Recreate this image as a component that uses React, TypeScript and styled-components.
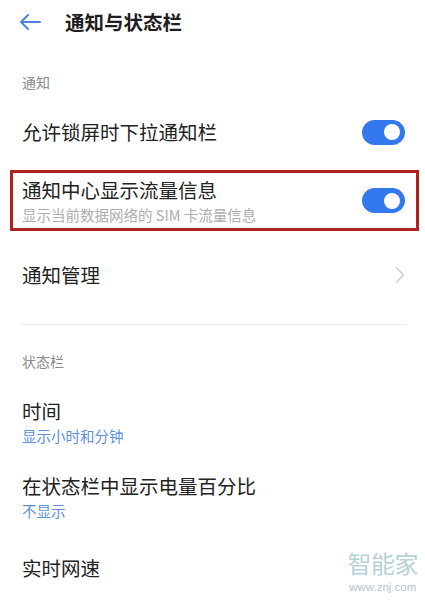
import React from "react";
import styled, { createGlobalStyle } from "styled-components";

const Global = createGlobalStyle`
  html, body { margin: 0; padding: 0; background: #ffffff; }
  body { font-family: "Noto Sans CJK SC", "Noto Sans", sans-serif; color: #222; }
`;

const Page = styled.div`
  position: relative;
  width: 425px;
  height: 600px;
  overflow: hidden;
  background: #fff;
`;

const Header = styled.div`
  height: 44px;
  display: flex;
  align-items: center;
  padding-left: 19px;
  gap: 24px;
`;

const Title = styled.div`
  font-size: 19.5px;
  font-weight: 700;
  color: #1e1e1e;
  line-height: 1;
`;

const SectionLabel = styled.div<{ $top: number; $bottom: number }>`
  padding: ${(p) => p.$top}px 22px ${(p) => p.$bottom}px;
  font-size: 14px;
  line-height: 20px;
  color: #8a8a8a;
`;

const Row = styled.div<{ $h: number; $highlight?: boolean }>`
  height: ${(p) => p.$h}px;
  display: flex;
  align-items: center;
  justify-content: space-between;
  box-sizing: border-box;
  padding: 0 ${(p) => (p.$highlight ? 11 : 20)}px 0 ${(p) => (p.$highlight ? 9 : 22)}px;
  margin: ${(p) => (p.$highlight ? "0 6px 0 10px" : "0")};
  border: ${(p) => (p.$highlight ? "3px solid #b0221d" : "none")};
`;

const TextCol = styled.div`
  display: flex;
  flex-direction: column;
  gap: 4px;
`;

const RowTitle = styled.div`
  font-size: 19.5px;
  line-height: 24px;
  color: #222;
`;

const RowSub = styled.div<{ $blue?: boolean }>`
  font-size: 14.5px;
  line-height: 18px;
  color: ${(p) => (p.$blue ? "#5d90dc" : "#adadad")};
`;

const Toggle = styled.div`
  width: 43px;
  height: 25px;
  border-radius: 13px;
  background: #3478ee;
  display: flex;
  align-items: center;
  justify-content: flex-end;
  padding-right: 5px;
  box-sizing: border-box;
`;

const Knob = styled.div`
  width: 16px;
  height: 16px;
  border-radius: 50%;
  background: #fff;
`;

const Divider = styled.div`
  height: 1px;
  background: #ececec;
  margin: 0 19px 0 21px;
`;

const Spacer = styled.div<{ $h: number }>`
  height: ${(p) => p.$h}px;
`;

const Watermark = styled.div`
  position: absolute;
  right: 7px;
  bottom: 6px;
  display: flex;
  flex-direction: column;
  align-items: center;
  gap: 4px;
`;

const WmBig = styled.div`
  font-size: 24px;
  line-height: 28px;
  height: 28px;
  color: #b7d2d6;
  letter-spacing: -0.5px;
`;

const WmSmall = styled.div`
  font-family: "Liberation Sans", "Noto Sans", sans-serif;
  font-size: 11.5px;
  line-height: 13px;
  color: #b5c4c8;
`;

const BackArrow = () => (
  <svg width="22" height="18" viewBox="0 0 22 18" fill="none">
    <path d="M21 9H2M9 2L2 9l7 7" stroke="#4f82d8" strokeWidth="2" strokeLinecap="round" strokeLinejoin="round" />
  </svg>
);

const Chevron = () => (
  <svg width="10" height="18" viewBox="0 0 10 18" fill="none">
    <path d="M1.5 1.5L8.5 9l-7 7.5" stroke="#cfcfcf" strokeWidth="1.6" strokeLinecap="round" strokeLinejoin="round" />
  </svg>
);

const Switch = () => (
  <Toggle>
    <Knob />
  </Toggle>
);

export default function App() {
  return (
    <Page>
      <Global />
      <Header>
        <BackArrow />
        <Title>通知与状态栏</Title>
      </Header>
      <SectionLabel $top={28} $bottom={14}>通知</SectionLabel>
      <Row $h={52}>
        <RowTitle>允许锁屏时下拉通知栏</RowTitle>
        <Switch />
      </Row>
      <Spacer $h={12} />
      <Row $h={61} $highlight>
        <TextCol>
          <RowTitle>通知中心显示流量信息</RowTitle>
          <RowSub>显示当前数据网络的 SIM 卡流量信息</RowSub>
        </TextCol>
        <Switch />
      </Row>
      <Row $h={88}>
        <RowTitle>通知管理</RowTitle>
        <Chevron />
      </Row>
      <Spacer $h={5} />
      <Divider />
      <SectionLabel $top={26} $bottom={12}>状态栏</SectionLabel>
      <Row $h={77}>
        <TextCol>
          <RowTitle>时间</RowTitle>
          <RowSub $blue>显示小时和分钟</RowSub>
        </TextCol>
      </Row>
      <Row $h={73}>
        <TextCol>
          <RowTitle>在状态栏中显示电量百分比</RowTitle>
          <RowSub $blue>不显示</RowSub>
        </TextCol>
      </Row>
      <Row $h={70}>
        <RowTitle>实时网速</RowTitle>
      </Row>
      <Watermark>
        <WmBig>智能家</WmBig>
        <WmSmall>www.znj.com</WmSmall>
      </Watermark>
    </Page>
  );
}
